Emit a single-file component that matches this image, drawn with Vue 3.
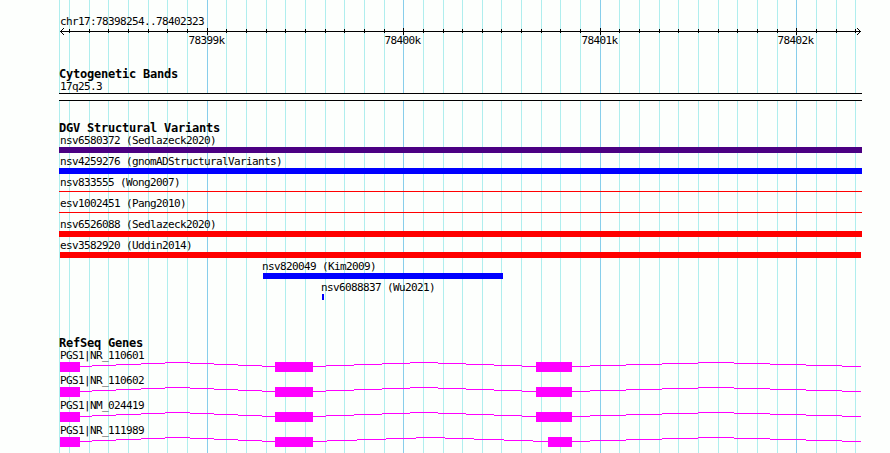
<script setup>
const majors = [207, 403, 600, 796]
const minors = [
  59, 69, 89, 108, 128, 148, 167, 187, 226, 246, 266, 285, 305, 325, 344, 364, 384,
  423, 443, 462, 482, 501, 521, 541, 560, 580, 619, 639, 659, 678, 698, 718, 737,
  757, 777, 816, 836, 855,
]
const ticks = [
  { x: 188.5, text: '78399k' },
  { x: 384.5, text: '78400k' },
  { x: 581.5, text: '78401k' },
  { x: 777.5, text: '78402k' },
]
const variants = [
  { name: 'nsv6580372 (Sedlazeck2020)', x: 59, w: 803, h: 6, color: '#4b0082' },
  { name: 'nsv4259276 (gnomADStructuralVariants)', x: 59, w: 803, h: 6, color: '#0000ff' },
  { name: 'nsv833555 (Wong2007)', x: 59, w: 803, h: 1, color: '#ff0000' },
  { name: 'esv1002451 (Pang2010)', x: 59, w: 803, h: 1, color: '#ff0000' },
  { name: 'nsv6526088 (Sedlazeck2020)', x: 59, w: 803, h: 6, color: '#ff0000' },
  { name: 'esv3582920 (Uddin2014)', x: 60, w: 801, h: 6, color: '#ff0000' },
  { name: 'nsv820049 (Kim2009)', x: 263, w: 240, h: 6, color: '#0000ff' },
  { name: 'nsv6088837 (Wu2021)', x: 322, w: 2, h: 6, color: '#0000ff' },
]

const first = [80, 92, 116, 141, 165, 190, 214, 238, 262, 275]
const second = [313, 326, 354, 382, 410, 438, 466, 494, 522, 536]
const secondLong = [313, 327, 357, 386, 416, 445, 474, 504, 533, 548]
const last = [572, 590, 626, 662, 698, 734, 770, 806, 842, 861]
const exons = [[60, 20], [275, 38], [536, 36]]
const genes = [
  { name: 'PGS1|NR_110601', exons, introns: [first, second, last] },
  { name: 'PGS1|NR_110602', exons, introns: [first, second, last] },
  { name: 'PGS1|NM_024419', exons, introns: [first, second, last] },
  { name: 'PGS1|NR_111989', exons: [[60, 20], [275, 38], [548, 24]], introns: [first, secondLong, last] },
]

// Each intron rises one pixel per step to its middle, then descends.
const intronPath = (stops) =>
  stops.slice(0, -1).map((x, i) => `M${x} ${0.5 + Math.abs(4 - i)}H${stops[i + 1]}`).join('')
const gridPath = (xs) => xs.map((x) => `M${x + 0.5} 0V453`).join('')
const tickPath = (xs, top, bottom) => xs.map((x) => `M${x + 0.5} ${top}V${bottom}`).join('')
</script>

<template>
  <main class="browser">
    <svg class="grid" width="890" height="453" shape-rendering="crispEdges" aria-hidden="true">
      <path :d="gridPath(minors)" stroke="#afeeee" />
      <path :d="gridPath(majors)" stroke="#87ceeb" />
    </svg>

    <section class="scale">
      <div class="label region">chr17:78398254..78402323</div>
      <svg class="axis" width="890" height="7" shape-rendering="crispEdges">
        <path d="M60 3.5H861" />
        <path :d="tickPath(minors.slice(1), 1, 5)" />
        <path :d="tickPath(majors, 0, 7)" />
        <path d="M61 2.5h1M61 4.5h1M62 1.5h1M62 5.5h1M63 0.5h1M63 6.5h1" />
        <path d="M859 2.5h1M859 4.5h1M858 1.5h1M858 5.5h1M857 0.5h1M857 6.5h1" />
      </svg>
      <svg class="ticks" width="890" height="13">
        <text v-for="t in ticks" :key="t.text" :x="t.x" y="9">{{ t.text }}</text>
      </svg>
    </section>

    <section class="track bands">
      <h2>Cytogenetic Bands</h2>
      <div class="label">17q25.3</div>
      <div class="band"></div>
    </section>

    <section class="track variants">
      <h2>DGV Structural Variants</h2>
      <div v-for="v in variants" :key="v.name" class="variant" :style="{ marginLeft: v.x + 'px' }">
        <div class="label" :class="{ edge: v.x === 59, inner: v.x > 60 }">{{ v.name }}</div>
        <div
          class="bar"
          :class="{ thin: v.h === 1 }"
          :style="{ width: v.w + 'px', height: v.h + 'px', background: v.color }"
        ></div>
      </div>
    </section>

    <section class="track genes">
      <h2>RefSeq Genes</h2>
      <div v-for="g in genes" :key="g.name" class="gene">
        <div class="label">{{ g.name }}</div>
        <svg width="890" height="10" shape-rendering="crispEdges">
          <path v-for="(s, i) in g.introns" :key="i" :d="intronPath(s)" stroke="#ff00ff" />
          <rect v-for="e in g.exons" :key="e[0]" :x="e[0]" y="0" :width="e[1]" height="10" fill="#ff00ff" />
        </svg>
      </div>
    </section>
  </main>
</template>

<style>
body {
  background: #fdfffd;
}
</style>

<style scoped>
.browser {
  position: relative;
  isolation: isolate;
  width: 890px;
  height: 453px;
  overflow: hidden;
  background: #fdfffd;
  color: #000;
  font-family: "DejaVu Sans Mono", monospace;
  font-size: 11px;
  letter-spacing: -0.622px;
}
svg {
  display: block;
}
.grid {
  position: absolute;
  inset: 0;
  z-index: -1;
}
.scale {
  height: 66px;
  padding-top: 15px;
  box-sizing: border-box;
}
.label {
  height: 13px;
  line-height: 13px;
  padding-left: 60px;
  white-space: pre;
}
.axis {
  stroke: #000;
}
.ticks {
  fill: #000;
}
h2 {
  margin: 0;
  padding-left: 59px;
  height: 14px;
  line-height: 16px;
  font-size: 12px;
  font-weight: bold;
  letter-spacing: -0.224px;
  white-space: pre;
}
.bands {
  height: 54px;
}
.band {
  width: 803px;
  height: 8px;
  margin-left: 59px;
  box-sizing: border-box;
  border-top: 1px solid #000;
  border-bottom: 1px solid #000;
  background: #fdfffd;
}
.variants {
  height: 215px;
}
.variant {
  height: 21px;
}
.variant .label {
  padding-left: 0;
}
.variant .label.edge {
  padding-left: 1px;
}
.variant .label.inner {
  margin-left: -1px;
}
.bar.thin {
  position: relative;
  top: 2px;
}
.gene {
  height: 25px;
}
</style>
